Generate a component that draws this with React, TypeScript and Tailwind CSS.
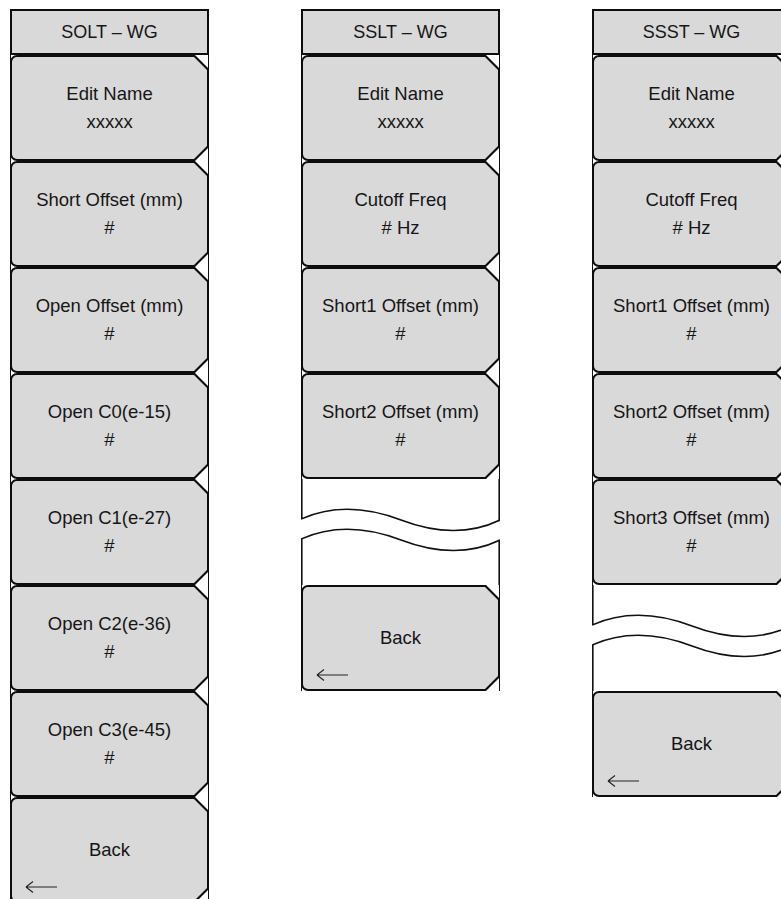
type Item = { top: string; bottom?: string };

type Menu = { title: string; items: Item[]; broken: boolean };

const menus: Menu[] = [
  {
    title: "SOLT – WG",
    broken: false,
    items: [
      { top: "Edit Name", bottom: "xxxxx" },
      { top: "Short Offset (mm)", bottom: "#" },
      { top: "Open Offset (mm)", bottom: "#" },
      { top: "Open C0(e-15)", bottom: "#" },
      { top: "Open C1(e-27)", bottom: "#" },
      { top: "Open C2(e-36)", bottom: "#" },
      { top: "Open C3(e-45)", bottom: "#" },
    ],
  },
  {
    title: "SSLT – WG",
    broken: true,
    items: [
      { top: "Edit Name", bottom: "xxxxx" },
      { top: "Cutoff Freq", bottom: "# Hz" },
      { top: "Short1 Offset (mm)", bottom: "#" },
      { top: "Short2 Offset (mm)", bottom: "#" },
    ],
  },
  {
    title: "SSST – WG",
    broken: true,
    items: [
      { top: "Edit Name", bottom: "xxxxx" },
      { top: "Cutoff Freq", bottom: "# Hz" },
      { top: "Short1 Offset (mm)", bottom: "#" },
      { top: "Short2 Offset (mm)", bottom: "#" },
      { top: "Short3 Offset (mm)", bottom: "#" },
    ],
  },
];

// right side corners are cut at 45deg, left side is rounded
const outerClip =
  "[clip-path:polygon(0_0,calc(100%_-_14px)_0,100%_14px,100%_calc(100%_-_14px),calc(100%_-_14px)_100%,0_100%)]";
const innerClip =
  "[clip-path:polygon(0_0,calc(100%_-_13px)_0,100%_13px,100%_calc(100%_-_13px),calc(100%_-_13px)_100%,0_100%)]";

function SoftKey({ item, back }: { item: Item; back?: boolean }) {
  return (
    <div className={`relative -mx-px h-[106px] rounded-l-[7px] bg-[#0d0d0d] ${outerClip}`}>
      <div
        className={`absolute inset-[2px] flex flex-col items-center justify-center rounded-l-[5px] bg-[#d9d9d9] text-[18.5px] leading-[28px] ${innerClip}`}
      >
        <span>{item.top}</span>
        {item.bottom && <span>{item.bottom}</span>}
      </div>
      {back && (
        <svg className="absolute bottom-[10px] left-[15px]" width="32" height="12" viewBox="0 0 32 12">
          <path d="M1 6 H32 M1 6 L8 0.5 M1 6 L8 11.5" fill="none" stroke="#222" strokeWidth="1.1" />
        </svg>
      )}
    </div>
  );
}

function BreakMark() {
  const wave = (y: number) =>
    `M0 ${y} Q 45 ${y - 20} 100 ${y + 1} T 199 ${y + 1}`;
  return (
    <svg className="-mx-px block bg-white" width="199" height="106" viewBox="0 0 199 106">
      <g fill="none" stroke="#111" strokeWidth="1.6">
        <path d="M0.8 0 V40 M198.2 0 V41" />
        <path d={wave(40)} />
        <path d={wave(60)} />
        <path d="M0.8 60 V106 M198.2 61 V106" />
      </g>
    </svg>
  );
}

function MenuColumn({ menu }: { menu: Menu }) {
  return (
    <div className="flex w-[199px] shrink-0 flex-col self-start border-x border-[#111] bg-white">
      <div className="-mx-px flex h-[46px] items-center justify-center border-2 border-[#0d0d0d] bg-[#d9d9d9]">
        {menu.title}
      </div>
      {menu.items.map((item, i) => (
        <SoftKey key={i} item={item} />
      ))}
      {menu.broken && <BreakMark />}
      <SoftKey item={{ top: "Back" }} back />
    </div>
  );
}

export default function App() {
  return (
    <main className="flex h-[899px] w-[781px] gap-[92px] overflow-hidden bg-white pl-[10px] pt-[9px] [font-family:'Liberation_Sans',Arial,sans-serif] text-[18px] text-[#161616]">
      {menus.map((m) => (
        <MenuColumn key={m.title} menu={m} />
      ))}
    </main>
  );
}
